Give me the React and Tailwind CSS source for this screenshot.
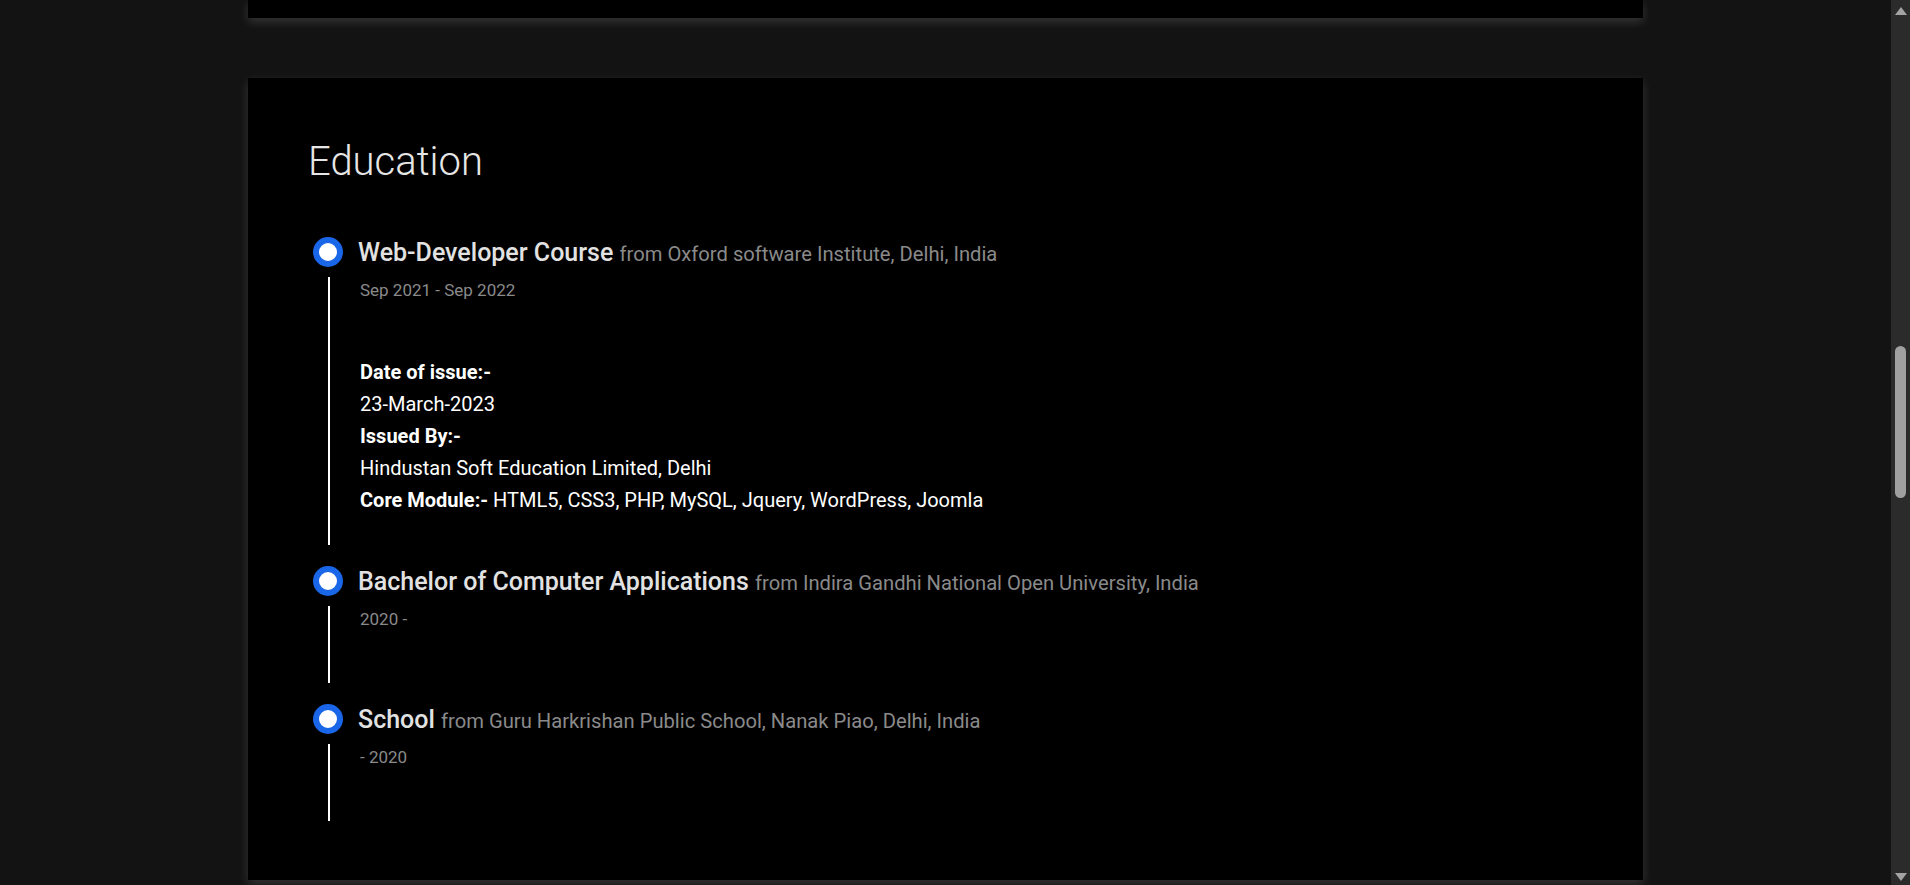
import React from "react";

function Item({ title, from, date, children, bodyPb }) {
  return (
    <div className="mb-[21px]">
      <div className="flex items-center h-[30px]">
        <div className="ml-[5px] w-[30px] h-[30px] rounded-full bg-white border-[6px] border-[#1a66e8] shrink-0" />
        <div className="ml-[15px] pt-[3px] leading-[30px] whitespace-nowrap text-[25px]">
          <span className="font-medium text-[#e2e2e2]">{title}</span>{" "}
          <span className="text-[20.2px] text-[#8a8a8a]">{from}</span>
        </div>
      </div>
      <div className={`ml-[20px] mt-[10px] border-l-2 border-white pl-[30px] pt-[1px] ${bodyPb}`}>
        <div className="text-[17px] leading-[24px] text-[#8a8a8a]">{date}</div>
        {children}
      </div>
    </div>
  );
}

export default function App() {
  return (
    <div className="flex h-[885px] w-full overflow-hidden bg-[#131313] font-['Roboto',sans-serif]">
      <div className="flex-1 flex flex-col items-center">
        <div className="w-[1395px] h-[18px] bg-black shrink-0 shadow-[0_4px_10px_rgba(255,255,255,0.14)]" />
        <div className="w-[1395px] mt-[60px] h-[802px] shrink-0 bg-black shadow-[0_4px_10px_rgba(255,255,255,0.14)] pl-[60px] pt-[60px]">
          <h2 className="text-[40px] leading-[48px] font-light text-[#e6e6e6] mb-[51px]">Education</h2>
          <Item
            title="Web-Developer Course"
            from="from Oxford software Institute, Delhi, India"
            date="Sep 2021 - Sep 2022"
            bodyPb="pb-[29px]"
          >
            <div className="mt-[54px] text-[20px] leading-[32px] text-white">
              <div className="font-bold">Date of issue:-</div>
              <div>23-March-2023</div>
              <div className="font-bold">Issued By:-</div>
              <div>Hindustan Soft Education Limited, Delhi</div>
              <div>
                <span className="font-bold">Core Module:-</span> HTML5, CSS3, PHP, MySQL, Jquery, WordPress, Joomla
              </div>
            </div>
          </Item>
          <Item
            title="Bachelor of Computer Applications"
            from="from Indira Gandhi National Open University, India"
            date="2020 -"
            bodyPb="pb-[52px]"
          />
          <Item
            title="School"
            from="from Guru Harkrishan Public School, Nanak Piao, Delhi, India"
            date="- 2020"
            bodyPb="pb-[52px]"
          />
        </div>
      </div>
      <div className="w-[19px] h-full bg-[#2b2b2b] flex flex-col items-center relative">
        <svg className="mt-[7px]" width="12" height="8" viewBox="0 0 12 8">
          <path d="M6 0 L12 8 L0 8 Z" fill="#a3a3a3" />
        </svg>
        <div className="absolute top-[346px] left-[4px] w-[11px] h-[152px] rounded-full bg-[#a0a0a0]" />
        <svg className="mt-auto mb-[4px]" width="12" height="8" viewBox="0 0 12 8">
          <path d="M0 0 L12 0 L6 8 Z" fill="#a3a3a3" />
        </svg>
      </div>
    </div>
  );
}
